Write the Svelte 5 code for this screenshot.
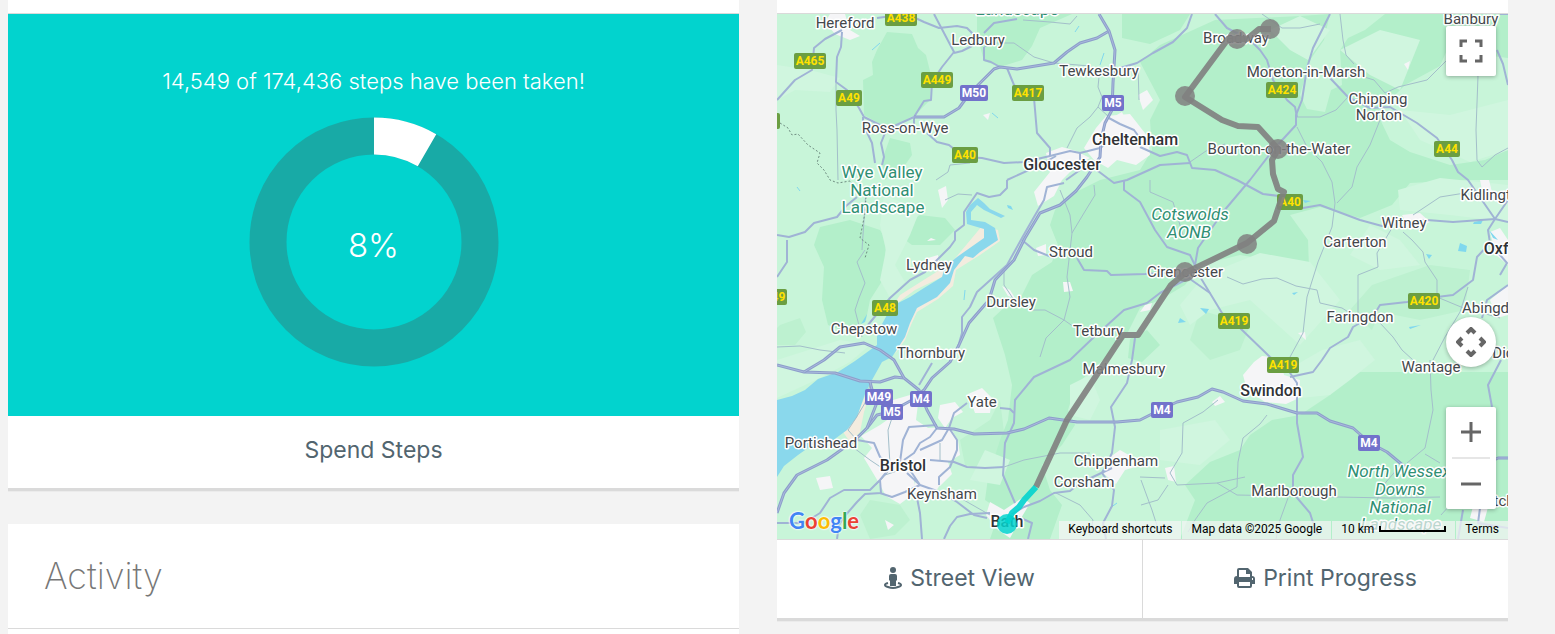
<script>
	const percent = 8
	const taken = "14,549"
	const total = "174,436"

	const ringRadius = 106
	const ringLength = 2 * Math.PI * ringRadius
	const ringDone = ringLength / 12

	// dense woodland
	const woods = [
		"M887 32L912 34 918 48 926 55 931 75 930 100 915 115 895 125 880 124 864 115 863 80 873 75 872 62 877 50Z",
		"M977 14H1072L1040 28 1032 46 1022 60 1000 67 984 61 977 35Z",
		"M1122 14H1190L1180 30 1150 44 1122 38Z",
		"M890 138L910 143 912 155 905 165 885 180 882 160Z",
		"M1140 62L1160 45 1215 20 1300 16 1330 14 1324 40 1310 60 1300 95 1307 109 1325 112 1331 90 1342 85 1340 50 1348 38 1365 30 1385 14H1508V58L1447 50 1440 66 1405 85 1390 100 1378 115 1390 140 1410 152 1450 165 1485 160 1508 150V180L1470 180 1410 183 1392 205 1360 218 1320 207 1290 215 1308 240 1309 268 1280 262 1240 255 1200 265 1185 285 1160 300 1140 308 1124 340 1092 370 1076 385 1068 410 1075 425 1062 445 1042 465 1050 490 1062 505 1050 539H990L1000 510 985 500 988 478 1000 440 1008 420 1012 385 1005 355 993 318 1010 302 1022 295 1032 275 1052 262 1058 245 1050 225 1055 210 1070 195 1100 180 1140 170 1152 150 1150 120 1160 100Z",
		"M1360 372H1508V539H1180L1195 500 1185 485 1210 462 1240 450 1250 435 1272 420 1300 415 1330 395 1342 380Z",
		"M820 227L850 220 880 230 886 240 884 278 870 300 866 320 850 334 828 325 822 300 824 267 814 245Z",
		"M904 225L920 215 945 218 955 230 940 245 912 245 900 236Z",
		"M1130 339L1147 330 1160 345 1142 362 1128 358Z",
	]

	const lightWoods = [
		"M1372 285L1430 265 1470 270 1465 310 1420 320 1380 312 1372 330 1350 310Z",
		"M780 325L800 318 806 332 795 345 777 345V328Z",
		"M870 500L900 505 910 520 895 535 870 539 860 515Z",
		"M960 440L990 420 1000 400 1005 440 985 470 965 465Z",
		"M1200 310L1250 325 1240 350 1210 360 1190 340Z",
	]

	// open farmland
	const fields = [
		"M777 65L810 70 840 78 830 92 795 90 777 100Z",
		"M884 195L920 210 910 235 895 265 905 282 890 298 880 280 886 250 880 225Z",
		"M1180 305L1205 275 1260 253 1310 262 1340 300 1300 345 1250 300 1210 310 1190 325Z",
		"M1300 16L1330 30 1308 60 1290 50 1270 30Z",
		"M1398 190L1440 178 1508 185V222L1450 215 1400 210Z",
		"M1340 50L1380 30 1420 40 1400 90 1370 75Z",
		"M1400 110L1450 115 1508 100V150L1470 162 1420 140Z",
		"M1322 350L1360 340 1375 360 1350 380 1330 395 1280 400 1270 380Z",
		"M1070 385L1090 375 1100 400 1090 420 1070 415Z",
		"M1160 430L1215 420 1230 440 1200 465 1160 460Z",
		"M777 360L840 340 870 345 850 362 820 378 777 398Z",
		"M1370 225L1400 240 1420 265 1380 270 1350 255Z",
		"M985 450L1010 460 1000 485 970 480Z",
	]

	const towns = [
		"M830 14L845 14 850 30 860 36 850 40 835 34 825 22Z",
		"M1046 153L1062 147 1076 151 1090 158 1076 166 1062 180 1054 196 1038 206 1034 192 1050 172Z",
		"M1084 148L1096 128 1106 116 1130 114 1148 137 1150 155 1136 165 1117 160 1108 168 1094 160Z",
		"M1108 120L1122 112 1130 128 1118 134ZM1138 95L1147 90 1153 100 1143 110Z",
		"M861 436L880 425 890 418 893 400 910 395 918 404 916 420 928 428 950 427 958 440 960 455 948 462 952 474 940 486 924 476 914 480 916 492 900 504 886 496 876 478 864 458 872 448Z",
		"M940 405L955 402 963 412 952 418 945 428 938 418Z",
		"M968 394L982 388 992 398 990 413 975 413Z",
		"M990 502L1004 510 1022 498 1030 503 1020 520 1010 538 998 530 986 515Z",
		"M1254 362L1262 356 1280 358 1284 375 1300 380 1299 398 1286 404 1265 402 1247 390 1243 375Z",
		"M1106 460L1120 450 1134 458 1142 465 1125 470 1116 484 1104 474Z",
		"M1165 468L1174 466 1176 482 1168 480ZM1212 402L1220 396 1225 402 1215 406Z",
		"M1036 248L1046 244 1046 255 1038 256ZM1002 286L1010 290 1015 298 1008 296Z",
		"M1402 215L1420 213 1430 222 1410 230Z",
		"M1480 180H1489L1492 192 1482 190ZM1490 232L1500 228 1508 240V265L1496 255Z",
		"M1490 300L1508 285V315L1497 318Z",
		"M938 190L946 186 948 200 942 208ZM1063 282L1070 282 1073 291 1064 292Z",
		"M920 470L940 485 930 500 912 492ZM816 478L830 476 833 488 820 490Z",
		"M1145 305L1152 303 1150 310 1140 312ZM1298 333L1305 332 1306 340Z",
		"M983 115L990 113 988 120ZM1404 64L1410 61 1408 70ZM1476 495L1490 500 1484 522 1470 518Z",
		"M885 520L894 525 888 530ZM936 240L931 238 927 241ZM928 258L938 255 940 266 930 268Z",
	]

	const sand = [
		"M982 226L998 230 1000 241 980 255 972 260 956 270 953 286 938 299 917 312 911 325 905 340 895 354 904 332 914 306 940 286 952 262Z",
		"M982 227L987 234 984 240 956 258 946 266 930 276 900 295 892 307 915 290 942 277 960 262 990 238Z",
		"M873 384L869 396 864 412 860 432 850 442 843 432 856 418 866 394Z",
	]

	const severn =
		"M966 212L970 205 978 198 984 203 990 209 1005 216 1001 218 984 210 977 205 971 212 971 220 985 222 995 228 998 240 980 252 973 258 965 256 954 270 950 283 937 297 917 308 910 323 905 337 892 357 882 362 872 380 865 394 857 417 847 430 832 441 815 443 798 455 784 466 777 477V400L792 396 805 390 818 379 838 372 855 361 877 345 877 333 887 315 898 303 910 297 924 288 942 277 945 267 957 257 984 238 984 229 967 224Z"

	const ponds = [
		"M1007 205L1011 206 1013 210 1008 208ZM1426 254L1432 255 1429 259ZM1460 243L1467 246 1466 252 1458 251Z",
		"M1200 308L1209 309 1206 314ZM1180 318L1186 322 1178 323ZM1474 222L1483 220 1481 224 1473 224Z",
		"M1292 293L1298 292 1294 295ZM1409 327L1421 325 1410 329ZM1489 230L1498 240 1493 238Z",
		"M861 324L867 314 865 322ZM1303 200L1311 201 1305 203ZM1392 333L1399 340 1396 337Z",
	]

	const streams = [
		"M872 50L880 43M992 113L998 118M1075 32L1079 26M1100 65L1104 53M965 290L964 300M797 187L800 191M1110 508L1117 503",
	]

	const lanes = [
		"M836 83L836 110 837 130 838 180",
		"M984 47L997 43 1014 43 1034 57 1054 63M1100 67L1098 87 1102 97 1098 107 1090 117 1077 128 1067 148",
		"M1023 20L1050 22 1070 24 1077 16M1139 100L1138 66M1098 107L1108 116M1054 63L1090 66",
		"M936 180L948 172 950 165 970 163M945 200L958 194 972 195",
		"M1340 14L1343 40 1346 55 1354 64M1361 76L1374 80 1385 93 1398 87 1427 80 1447 60 1478 76 1476 130 1477 160 1482 167",
		"M1380 120L1370 145 1357 167 1352 187 1337 203M1297 117L1320 117 1336 110 1348 97",
		"M1297 127L1307 147 1322 162 1332 182 1335 203 1332 227 1318 262 1307 297 1303 333 1290 357",
		"M1150 180L1150 192 1173 202 1183 235M1190 162L1206 151 1225 144",
		"M1227 277L1243 284 1262 279 1277 278 1296 286 1317 290 1320 303 1342 308 1353 315",
		"M1403 232L1412 240 1423 252 1425 262 1437 280 1437 297 1461 307 1500 318M1392 228L1377 253 1378 267 1358 275 1358 313",
		"M1468 287L1460 312 1445 337 1433 360M1380 323L1393 337 1402 350 1413 360",
		"M1413 215L1440 197 1465 193M1482 167L1495 155 1508 148M1262 14L1282 28 1300 28 1320 24",
		"M1094 185L1095 195 1084 213 1072 233 1067 277 1070 297 1064 320 1046 338 1040 357M1060 190L1070 215 1072 233",
		"M1030 310L1045 310 1064 320 1074 327M1004 270V285L1014 300",
		"M865 250L857 262 865 283 859 298 855 310 862 337M777 347L800 346 820 350 845 353M862 250L866 190",
		"M1430 360L1431 390 1433 410 1425 448 1407 463M1425 454L1440 463",
		"M1267 415L1260 424 1243 438 1238 462 1237 487 1207 503 1195 520 1188 532",
		"M1218 400L1203 412 1183 423 1182 453 1170 473 1177 485 1217 483 1237 495 1337 497 1390 498 1440 497",
		"M1140 477L1165 478M1141 480L1152 510 1160 535M1168 485L1158 500 1141 505M1217 483L1245 477",
		"M1004 467L1024 460 1060 453 1090 453M1056 493L1080 505 1093 520 1090 535",
		"M857 440L848 430 856 418 865 403 870 385M850 445L870 460 888 472 876 485",
		"M940 460L940 443M890 465L888 430 893 415M955 495L990 515M885 475L900 470 925 467",
		"M1288 498L1280 520 1276 539M1377 500L1386 482 1400 466M1441 515L1450 505",
	]

	const roads = [
		"M842 30L825 39 814 48 812 70 795 80 777 100",
		"M842 32L841 47 837 57 836 82 847 90 859 108 864 117 880 125 892 127 914 117",
		"M863 117V124L872 143 875 163M885 133L881 143 884 157 882 165",
		"M877 18L907 14 924 22 939 28 957 26 967 28 974 35M972 46L962 51 954 53",
		"M934 14L944 33 954 52 942 67 932 82 931 100 924 101 914 117M914 117V128",
		"M984 47V60L991 62 1000 67M984 33L994 23 1017 19M1007 68L1014 85 1034 98 1037 133 1050 148V156",
		"M927 133L937 142 949 145 964 157 982 158 1004 163 1024 162 1050 156 1070 151 1080 153 1100 148 1112 140",
		"M1120 68L1137 63 1153 53 1173 42 1187 28 1192 14M1107 117L1120 124 1134 130 1142 141M1080 153V170L1066 180",
		"M1007 180L1040 165 1056 156",
		"M1140 147L1160 156 1177 152 1187 155 1192 168 1215 170 1237 180 1263 194 1287 197 1303 208 1320 205 1360 220 1382 226 1427 220 1453 222 1495 219 1508 222",
		"M1094 168L1114 183 1127 180 1160 165 1190 163",
		"M1330 14L1313 48 1307 68 1302 100 1296 115V125L1273 150 1250 180 1223 212 1198 248 1195 265",
		"M1215 14L1227 28 1250 40 1260 50 1267 60 1273 80 1287 100 1295 107 1297 117",
		"M1330 78L1348 97 1370 108 1390 107 1417 123 1437 138 1452 160 1458 172 1468 180 1495 219",
		"M1497 50L1503 64 1508 85M1500 14H1508",
		"M1508 200L1495 219 1488 230 1490 243 1477 257 1473 280 1453 295 1437 297 1407 302 1380 305 1374 315 1353 327 1348 337 1330 348 1322 360 1313 372 1290 377",
		"M1493 247L1507 263 1500 275M1508 285L1487 300 1482 318M1501 360L1488 385 1492 407",
		"M1124 180V190L1140 202 1155 230 1167 247 1190 255 1202 280 1222 313 1240 328 1270 357 1288 370 1297 383V423L1303 457 1293 475V493L1310 513 1317 535",
		"M1022 240L1034 250 1054 258M1077 258L1084 270 1107 271 1111 275 1145 274 1180 272 1210 293",
		"M1195 275L1160 293 1147 303 1124 310 1094 337 1070 360 1034 377 1015 400 1014 423 1005 443 1003 475 1015 503",
		"M1135 338L1132 360 1127 383 1111 407 1115 427 1112 453 1102 473 1114 490 1112 506 1103 523 1106 539",
		"M1112 468L1080 483 1070 491 1054 493 1040 501 1024 507 1012 514 1032 523 1028 539",
		"M777 235L789 237 805 232 814 223 837 217 846 206 857 197M777 277L787 262V240",
		"M1007 180V188L1000 195 989 197 977 193 964 212V225L955 232V240L950 247 937 260 925 272 910 280 890 298 868 325",
		"M1064 183L1047 187 1044 200 1034 217 1022 238 1007 265 977 292 970 307 962 317V333L958 347M932 363L919 385",
		"M937 428L930 437 920 443 914 453 904 460 M937 425L909 427 903 440 900 462M949 428L942 440 920 450",
		"M967 403L954 413 949 428 957 440V450L950 467 939 477V485M930 460L954 462 967 467 985 468 1004 467",
		"M907 473L920 485 940 492 957 502 974 515 987 518M880 493L892 497 905 492 920 485 910 470",
		"M917 498L920 513 922 539M990 513L970 514 957 517 950 526 944 539",
		"M894 463L880 480 870 490 844 490 830 498 820 513 804 523 777 523M880 480L881 493 865 494 857 502 844 517 839 525 837 539",
		"M857 440L874 443 880 457 893 466M1000 408L1010 409 1014 413",
		"M1480 508L1478 523 1508 528M1463 510L1458 539",
	]

	const motorways = [
		"M914 117L944 117 959 108 970 93 980 83 994 69 1000 67 1017 69 1054 63 1067 52 1080 43 1097 38 1109 31",
		"M1099 14L1109 31 1115 50 1113 83 1112 110 1105 123 1101 140 1100 157 1087 177 1076 191 1060 205 1040 213 1025 238 1014 260 995 280 989 300 969 323 959 345 950 362 932 378 924 390 912 400 890 412 877 415 867 428 855 440 827 460 797 475 784 493 777 513",
		"M777 365L804 372 835 373 860 381 880 382 895 377 904 378 919 390 927 410 937 428 954 429 974 434 1007 433 1024 429 1049 418 1077 422 1117 422 1140 420 1160 410 1177 402 1198 397 1212 389 1223 392 1243 401 1267 404 1297 413 1317 413 1330 421 1353 428 1370 443 1387 452 1405 467",
		"M804 372L824 360 840 347 864 343 880 350 894 360 904 378M870 382L876 405 867 428",
		"M1490 462L1498 458H1508",
	]

	const border =
		"M780 123L788 128 792 135 798 134 808 145 820 153 817 163 824 170 830 180 838 183 850 181 866 197 865 213 860 238 869 245 865 258"

	const labels = [
		["Hereford", 845, 23], ["Ledbury", 978, 40], ["Tewkesbury", 1099, 71],
		["Ross-on-Wye", 905, 128], ["Banbury", 1471, 19],
		["Moreton-in-Marsh", 1306, 72], ["Chipping", 1378, 99], ["Norton", 1379, 115],
		["Bourton-on-the-Water", 1279, 149], ["Broadway", 1236, 38], ["Kidlington", 1494, 195],
		["Witney", 1404, 223], ["Carterton", 1355, 242], ["Stroud", 1071, 252],
		["Lydney", 929, 265], ["Cirencester", 1185, 272], ["Dursley", 1011, 302],
		["Tetbury", 1098, 331], ["Chepstow", 864, 329], ["Thornbury", 931, 353],
		["Malmesbury", 1124, 369], ["Faringdon", 1360, 317], ["Abingdon", 1494, 308],
		["Wantage", 1431, 367], ["Didcot", 1514, 353], ["Yate", 982, 402],
		["Portishead", 821, 443], ["Keynsham", 942, 494], ["Chippenham", 1116, 461],
		["Corsham", 1084, 482], ["Marlborough", 1294, 491], ["Thatcham", 1502, 501],
	]

	const cities = [
		["Cheltenham", 1135, 139], ["Gloucester", 1062, 164], ["Oxford", 1508, 248],
		["Swindon", 1271, 390], ["Bristol", 903, 465], ["Bath", 1007, 521],
	]

	const parks = [
		["Wye Valley", 882, 172], ["National", 882, 190], ["Landscape", 883, 207],
		["Landscape", 1017, 9],
	]

	const slantedParks = [
		["Cotswolds", 1190, 214], ["AONB", 1189, 232], ["North Wessex", 1399, 471],
		["Downs", 1400, 489], ["National", 1400, 507], ["Landscape", 1401, 524],
	]

	const shields = [
		["A438", 901, 18], ["A465", 810, 61], ["A49", 849, 98], ["A449", 937, 80],
		["A417", 1028, 93], ["A40", 965, 155], ["A424", 1282, 90], ["A44", 1447, 149],
		["A40", 1290, 202], ["A48", 885, 308], ["A419", 1234, 321], ["A419", 1283, 365],
		["A420", 1424, 301], ["A449", 771, 297], ["", 764, 121], ["M50", 974, 93],
		["M5", 1113, 103], ["M49", 879, 397], ["M5", 892, 412], ["M4", 921, 399],
		["M4", 1162, 410], ["M4", 1369, 443],
	]

	function shieldWidth(name) {
		return { 2: 22, 3: name[0] == "M" ? 28 : 26 }[name.length] || 32
	}

	const walkedRoute = "M1007 523L1012 513 1019 507 1024 500 1036 487"
	const route =
		"M1036 487L1067 420 1123 335H1138L1171 285 1185 273 1247 243 1274 221 1282 197 1284 192 1278 189 1273 174 1272 160 1278 149 1258 127 1238 126 1222 120 1185 97 1228 39H1237M1237 39H1247L1259 29 1271 29"
	const stops = [[1185, 272], [1247, 244], [1278, 149], [1185, 96], [1237, 39], [1270, 29]]
</script>

<main>
	<div class="column">
		<section class="card">
			<div class="card-top"></div>
			<div class="progress">
				<p>{taken} of {total} steps have been taken!</p>
				<div class="ring">
					<svg viewBox="0 0 250 250" aria-hidden="true">
						<circle cx="125" cy="125" r={ringRadius} />
						<circle
							class="done"
							cx="125"
							cy="125"
							r={ringRadius}
							stroke-dasharray="{ringDone} {ringLength}"
							transform="rotate(-90 125 125)"
						/>
					</svg>
					<span>{percent}%</span>
				</div>
			</div>
			<div class="actions short">
				<button>Spend Steps</button>
			</div>
		</section>

		<section class="card activity">
			<h2>Activity</h2>
			<div class="activity-list"></div>
		</section>
	</div>

	<div class="column">
		<section class="card">
			<div class="card-top"></div>
			<div class="map">
				<svg class="tiles" viewBox="777 14 731 525" preserveAspectRatio="xMidYMid slice">
					<rect x="777" y="14" width="731" height="525" fill="#c8f5d9" />
					{#each lightWoods as d}<path {d} fill="#bdf1d0" />{/each}
					{#each woods as d}<path {d} fill="#b3efca" />{/each}
					{#each fields as d}<path {d} fill="#d0f6df" />{/each}
					{#each sand as d}<path {d} fill="#f3ecdf" />{/each}
					{#each towns as d}<path {d} fill="#f5f5f7" />{/each}
					<path d={severn} fill="#8ad8ec" />
					{#each ponds as d}<path {d} fill="#80d8ee" />{/each}
					{#each streams as d}<path {d} class="stream" />{/each}
					{#each lanes as d}<path {d} class="lane" />{/each}
					{#each roads as d}<path {d} class="road" />{/each}
					{#each motorways as d}
						<path {d} class="motorway" />
						<path {d} class="motorway-core" />
					{/each}
					<path d={border} class="border" />

					{#each shields as [name, x, y]}
						<rect
							class="shield"
							class:m={name[0] == "M"}
							x={x - shieldWidth(name) / 2}
							y={y - 8}
							width={shieldWidth(name)}
							height="16"
							rx="2"
						/>
						<text class="shield-name" class:m={name[0] == "M"} {x} y={y + 4}>{name}</text>
					{/each}
					{#each parks as [name, x, y]}
						<text class="park" {x} y={y + 6}>{name}</text>
					{/each}
					{#each slantedParks as [name, x, y]}
						<text class="park slanted" {x} y={y + 6}>{name}</text>
					{/each}
					{#each labels as [name, x, y]}
						<text class="town" {x} y={y + 5}>{name}</text>
					{/each}
					{#each cities as [name, x, y]}
						<text class="city" {x} y={y + 6}>{name}</text>
					{/each}

					<path class="route" d={route} />
					{#each stops as [x, y]}
						<circle class="stop" cx={x} cy={y} r="10" />
					{/each}
					<path class="route walked" d={walkedRoute} />
					<circle class="stop walked" cx="1007" cy="524" r="10" />
				</svg>

				<a class="google" href="https://maps.google.com/" aria-label="Google">
					<span class="blue">G</span><span class="red">o</span><span class="yellow">o</span><span class="blue">g</span><span class="green">l</span><span class="red">e</span>
				</a>

				<button class="control fullscreen" aria-label="Toggle fullscreen view">
					<svg width="24" height="24" viewBox="0 0 24 24">
						<path d="M2 8V2H8M16 2H22V8M22 16V22H16M8 22H2V16" />
					</svg>
				</button>
				<button class="control camera" aria-label="Map camera controls">
					<svg width="30" height="30" viewBox="0 0 30 30">
						<path d="M11 6L15 2 19 6M24 11L28 15 24 19M19 24L15 28 11 24M6 19L2 15 6 11" />
					</svg>
				</button>
				<div class="zoom">
					<button aria-label="Zoom in">
						<svg width="20" height="20" viewBox="0 0 20 20"><path d="M10 0V20M0 10H20" /></svg>
					</button>
					<hr />
					<button aria-label="Zoom out">
						<svg width="20" height="20" viewBox="0 0 20 20"><path d="M0 10H20" /></svg>
					</button>
				</div>

				<div class="credits">
					<button>Keyboard shortcuts</button>
					<span>Map data ©2025 Google</span>
					<button class="scale">10 km <i></i></button>
					<a href="https://www.google.com/help/terms_maps/">Terms</a>
				</div>
			</div>
			<div class="actions">
				<button>
					<svg width="18" height="24" viewBox="0 0 18 24">
						<circle cx="9" cy="4" r="3" />
						<path d="M7 8H11Q13 8 13 10V14L12 15V20H6V15L5 14V10Q5 8 7 8Z" />
						<path class="line" d="M4 17C0 18 0 20 4 21Q9 23 14 21C18 20 18 18 14 17" />
					</svg>
					Street View
				</button>
				<button>
					<svg width="21" height="20" viewBox="0 0 21 20">
						<path
							fill-rule="evenodd"
							d="M3 8V2Q3 0 5 0H14L18 4V8Q21 8 21 11V16H18V18Q18 20 16 20H5Q3 20 3 18V16H0V11Q0 8 3 8ZM5 2V9H16V6H12V2ZM5 14V18H16V14ZM18 10V12H19V10Z"
						/>
					</svg>
					Print Progress
				</button>
			</div>
		</section>
	</div>
</main>

<style>
	:global(body) {
		margin: 0;
		background: #f3f3f3;
	}

	main {
		display: flex;
		gap: 38px;
		padding: 0 47px 0 8px;
		font-family: Inter, "Open Sans", sans-serif;
		font-weight: 300;
	}

	.column {
		flex: 1;
		min-width: 0;
		display: flex;
		flex-direction: column;
		gap: 36px;
	}

	.card {
		background: white;
		box-shadow: 0 3px #dadada, 0 4px #ebebeb;
	}

	.card-top {
		height: 13px;
		border-bottom: 1px solid #dadada;
	}

	button {
		border: 0;
		padding: 0;
		background: none;
		font: inherit;
		color: inherit;
		cursor: pointer;
	}

	.progress {
		background: #02d3ce;
		color: white;
		padding: 51px 20px 49px;
		text-align: center;
	}

	.progress p {
		margin: 0 0 20px;
		font-size: 22px;
		line-height: 32px;
	}

	.ring {
		position: relative;
		width: 250px;
		height: 250px;
		margin: 0 auto;
		display: grid;
		place-items: center;
	}

	.ring svg {
		position: absolute;
		inset: 0;
	}

	.ring circle {
		fill: none;
		stroke: #18aaa6;
		stroke-width: 37;
	}

	.ring circle.done {
		stroke: white;
	}

	.ring span {
		position: relative;
		padding-top: 6px;
		font-size: 33px;
	}

	.actions {
		display: flex;
		height: 78px;
		border-top: 1px solid #dadada;
		box-sizing: border-box;
		padding-bottom: 2px;
		color: #52656f;
		font-size: 23px;
		font-weight: 400;
	}

	.actions:not(.short) {
		height: 79px;
		padding-bottom: 0;
	}

	.actions.short {
		height: 72px;
		border-top: 0;
	}

	.actions button {
		flex: 1;
		display: flex;
		align-items: center;
		justify-content: center;
		gap: 8px;
		padding-bottom: 2px;
	}

	.actions button + button {
		border-left: 1px solid #dadada;
	}

	.actions svg {
		fill: #52656f;
	}

	.actions .line {
		fill: none;
		stroke: #52656f;
		stroke-width: 2;
	}

	.activity h2 {
		margin: 0;
		padding: 30px 36px;
		border-bottom: 1px solid #dadada;
		color: #777;
		font-size: 36px;
		font-weight: 200;
		line-height: 44px;
	}

	.activity-list {
		min-height: 5px;
	}

	.map {
		position: relative;
		height: 525px;
		overflow: hidden;
		font-family: Roboto, sans-serif;
		font-weight: 400;
	}

	.tiles {
		display: block;
		width: 100%;
		height: 100%;
	}

	.tiles path {
		stroke-linejoin: round;
	}

	.stream,
	.lane,
	.road,
	.motorway,
	.motorway-core,
	.border,
	.route {
		fill: none;
	}

	.stream {
		stroke: #80d8ee;
	}

	.lane {
		stroke: #a3bfca;
	}

	.road {
		stroke: #a0b3d5;
		stroke-width: 2;
	}

	.motorway {
		stroke: #8d9ecb;
		stroke-width: 3;
	}

	.motorway-core {
		stroke: #a9b9dc;
	}

	.border {
		stroke: #6f8d81;
		stroke-dasharray: 2 2;
	}

	.tiles text {
		text-anchor: middle;
		paint-order: stroke;
		stroke: white;
		stroke-width: 3px;
		stroke-linejoin: round;
	}

	.town {
		fill: #44474b;
		font-size: 15px;
	}

	.city {
		fill: #303236;
		font-size: 16px;
		font-weight: 500;
	}

	.park {
		fill: #2f8f73;
		font-size: 17px;
	}

	.slanted {
		font-style: italic;
	}

	.shield {
		fill: #6b9e42;
	}

	.shield.m {
		fill: #7272cb;
	}

	.tiles .shield-name {
		fill: #ffe200;
		stroke: none;
		font-size: 12px;
		font-weight: 700;
	}

	.tiles .shield-name.m {
		fill: white;
	}

	.route {
		stroke: #808080;
		stroke-width: 6;
		opacity: 0.9;
	}

	.stop {
		fill: #808080;
		opacity: 0.85;
	}

	.route.walked {
		stroke: #02d3ce;
	}

	.stop.walked {
		fill: #02d3ce;
	}

	.google {
		position: absolute;
		left: 12px;
		bottom: 4px;
		display: flex;
		font-family: Lato, sans-serif;
		font-size: 22px;
		font-weight: 700;
		line-height: 28px;
		text-decoration: none;
		text-shadow: 0 0 2px white, 0 0 2px white, 0 0 2px white;
	}

	.blue {
		color: #4285f4;
	}

	.red {
		color: #ea4335;
	}

	.yellow {
		color: #fbbc04;
	}

	.green {
		color: #34a853;
	}

	.control,
	.zoom {
		position: absolute;
		right: 12px;
		width: 50px;
		background: white;
		border-radius: 2px;
		box-shadow: 0 1px 4px rgba(0, 0, 0, 0.3);
	}

	.control {
		height: 50px;
		display: grid;
		place-items: center;
	}

	.fullscreen {
		top: 12px;
	}

	.camera {
		bottom: 172px;
		border-radius: 50%;
	}

	.control path,
	.zoom path {
		fill: none;
		stroke: #666;
		stroke-width: 3;
	}

	.camera path {
		stroke-width: 4;
	}

	.zoom {
		bottom: 30px;
	}

	.zoom button {
		display: grid;
		place-items: center;
		width: 50px;
		height: 50px;
	}

	.zoom hr {
		margin: 0 6px;
		border: 0;
		height: 2px;
		background: #e6e6e6;
	}

	.credits {
		position: absolute;
		right: 0;
		bottom: 0;
		display: flex;
		gap: 1px;
		color: black;
		font-size: 12px;
		line-height: 16px;
	}

	.credits > * {
		padding: 0 9px 2px;
		background: rgba(245, 245, 245, 0.7);
		color: black;
		text-decoration: none;
	}

	.scale {
		display: flex;
		align-items: center;
		gap: 5px;
	}

	.scale i {
		width: 63px;
		height: 4px;
		border: 2px solid black;
		border-top: 0;
	}
</style>
